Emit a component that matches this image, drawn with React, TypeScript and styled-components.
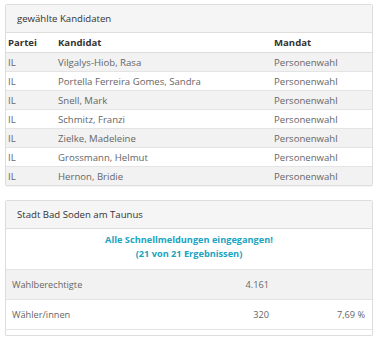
import styled, { createGlobalStyle } from "styled-components";

const GlobalStyle = createGlobalStyle`
  body {
    margin: 0;
    background: #ffffff;
    font-family: "Open Sans", "Liberation Sans", sans-serif;
    color: #333333;
  }
`;

const kandidaten = [
  { partei: "IL", name: "Vilgalys-Hiob, Rasa", mandat: "Personenwahl" },
  { partei: "IL", name: "Portella Ferreira Gomes, Sandra", mandat: "Personenwahl" },
  { partei: "IL", name: "Snell, Mark", mandat: "Personenwahl" },
  { partei: "IL", name: "Schmitz, Franzi", mandat: "Personenwahl" },
  { partei: "IL", name: "Zielke, Madeleine", mandat: "Personenwahl" },
  { partei: "IL", name: "Grossmann, Helmut", mandat: "Personenwahl" },
  { partei: "IL", name: "Hernon, Bridie", mandat: "Personenwahl" },
];

export default function App() {
  return (
    <Page>
      <GlobalStyle />
      <Panel>
        <PanelHeading>gewählte Kandidaten</PanelHeading>
        <Table>
          <thead>
            <tr>
              <HeadCell style={{ width: 46 }}>Partei</HeadCell>
              <HeadCell>Kandidat</HeadCell>
              <HeadCell style={{ width: 96 }}>Mandat</HeadCell>
            </tr>
          </thead>
          <tbody>
            {kandidaten.map((k, i) => (
              <Row key={k.name} striped={i % 2 === 0}>
                <Cell>{k.partei}</Cell>
                <Cell>{k.name}</Cell>
                <Cell>{k.mandat}</Cell>
              </Row>
            ))}
          </tbody>
        </Table>
      </Panel>

      <Panel>
        <PanelHeading>Stadt Bad Soden am Taunus</PanelHeading>
        <Notice>
          Alle Schnellmeldungen eingegangen!
          <br />
          (21 von 21 Ergebnissen)
        </Notice>
        <StatRow striped>
          <StatLabel>Wahlberechtigte</StatLabel>
          <StatValue>4.161</StatValue>
          <StatValue></StatValue>
        </StatRow>
        <StatRow>
          <StatLabel>Wähler/innen</StatLabel>
          <StatValue>320</StatValue>
          <StatValue>7,69 %</StatValue>
        </StatRow>
        <PanelFooterSpace />
      </Panel>
    </Page>
  );
}

const Page = styled.div`
  display: flex;
  flex-direction: column;
  gap: 14px;
  padding: 4px 7px 0 5px;
`;

const Panel = styled.div`
  border: 1px solid #dddddd;
  border-radius: 2px;
  background: #ffffff;
  box-shadow: 0 1px 1px rgba(0, 0, 0, 0.05);
`;

const PanelHeading = styled.div`
  background: #f5f5f5;
  border-bottom: 1px solid #dddddd;
  height: 27px;
  display: flex;
  align-items: center;
  padding-left: 11px;
  font-size: 9.6px;
  color: #333333;
`;

const Table = styled.table`
  width: 100%;
  border-collapse: collapse;
  font-size: 9.6px;
`;

const HeadCell = styled.th`
  text-align: left;
  font-weight: 700;
  height: 19px;
  padding: 0 2px;
  border-bottom: 1px solid #dddddd;
  color: #333333;
`;

const Row = styled.tr<{ striped?: boolean }>`
  background: ${(p) => (p.striped ? "#f2f2f2" : "#ffffff")};
`;

const Cell = styled.td`
  height: 18px;
  padding: 0 2px;
  border-top: 1px solid #e4e4e4;
  color: #666666;
`;

const Notice = styled.div`
  text-align: center;
  font-weight: 700;
  color: #20a3c0;
  font-size: 9.2px;
  line-height: 14px;
  padding: 4px 0 8px;
  border-bottom: 1px solid #e4e4e4;
`;

const StatRow = styled.div<{ striped?: boolean }>`
  display: grid;
  grid-template-columns: 1fr 100px 96px;
  align-items: center;
  height: 29px;
  padding: 0 7px 0 6px;
  font-size: 9.2px;
  color: #666666;
  background: ${(p) => (p.striped ? "#f2f2f2" : "#ffffff")};
  border-bottom: 1px solid #e4e4e4;
  &:last-of-type {
    border-bottom: none;
  }
`;

const StatLabel = styled.div``;

const StatValue = styled.div`
  text-align: right;
`;

const PanelFooterSpace = styled.div`
  height: 5px;
`;
